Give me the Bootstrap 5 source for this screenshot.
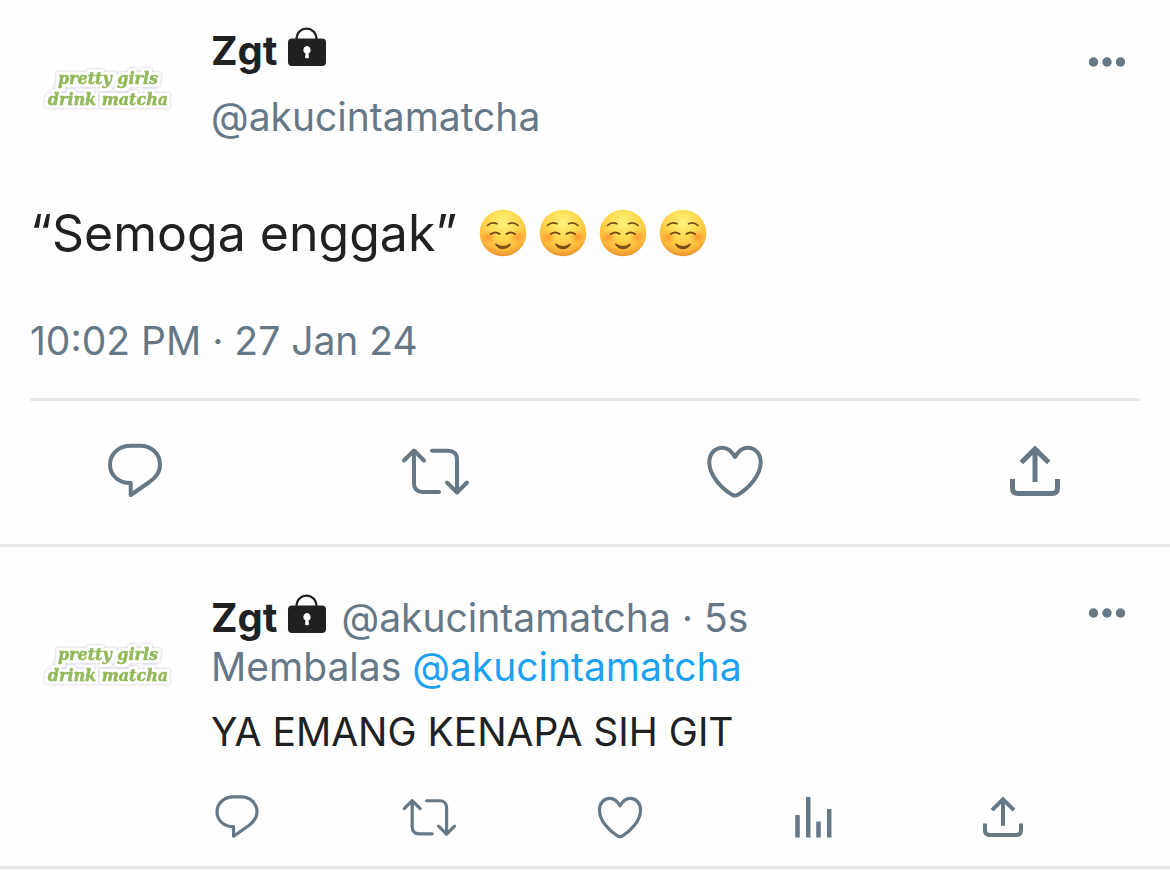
<!DOCTYPE html>
<html lang="id">
<head>
<meta charset="utf-8">
<meta name="viewport" content="width=device-width, initial-scale=1">
<title>Zgt: “Semoga enggak”</title>
<link href="https://cdn.jsdelivr.net/npm/bootstrap@5.3.0/dist/css/bootstrap.min.css" rel="stylesheet">
<style>
  body { font-family: Inter, "Liberation Sans", sans-serif; font-size: 39px; line-height: 48px; color: #202122; background: #fefefe; }
  .slate { color: #667786; }
  .mention { color: #1da1f2; }
  .author { font-size: 40px; }
  .rule-bottom { border-bottom: 3px solid #e8e8e8; }
  .post-main { padding: 27px 30px 43px; }
  .post-reply { padding: 46px 30px 19px; line-height: 49px; }
  .avatar { width: 156px; height: 120px; }
  .avatar text { font: italic bold 16px "DejaVu Serif", serif; fill: #93b95c; stroke: #93b95c; stroke-width: .5px; text-anchor: middle; }
  .post-reply .avatar { margin-top: 10px; }
  .post-body { margin-left: 25px; }
  .name-row { gap: 10px; }
  .handle-row { margin-top: 18px; }
  .lead-text { font-size: 50px; line-height: 60px; margin: 56px 0 54px; gap: 22px; }
  .emoji-row { gap: 12px; }
  .emoji { width: 48px; height: 48px; }
  .lock { width: 40px; height: 40px; }
  .dots { width: 40px; height: 40px; }
  .timestamp { padding-bottom: 33px; }
  .post-actions { padding: 40px 75px 0; }
  .reply-actions { padding: 31px 107px 0 177px; }
  .icon-btn { width: 60px; height: 60px; padding: 0; border: 0; background: none; color: #667786; display: flex; align-items: center; justify-content: center; }
  .action-icon { width: 60px; height: 60px; overflow: visible; fill: none; stroke: currentColor; stroke-width: 4; }
  .reply-actions .action-icon { width: 48px; height: 48px; }
  .more-btn { width: 40px; height: 40px; margin-right: 13px; }
  .post-main .more-btn { margin-top: 15px; }
</style>
</head>
<body>
<svg class="position-absolute" width="0" height="0" aria-hidden="true">
  <defs>
    <radialGradient id="skin" cx="50%" cy="28%" r="72%">
      <stop offset="0" stop-color="#fff27c"/><stop offset=".45" stop-color="#ffda50"/><stop offset=".8" stop-color="#fcb93b"/><stop offset="1" stop-color="#e8922f"/>
    </radialGradient>
    <radialGradient id="blush"><stop offset="0" stop-color="#ff7a25" stop-opacity=".65"/><stop offset="1" stop-color="#ff8a2b" stop-opacity="0"/></radialGradient>
    <filter id="cutout" x="-10%" y="-30%" width="120%" height="160%" color-interpolation-filters="sRGB">
      <feMorphology in="SourceAlpha" operator="dilate" radius="3" result="wide"/>
      <feGaussianBlur in="wide" stdDeviation="1" result="soft"/>
      <feFlood flood-color="#bfb6cc"/><feComposite in2="soft" operator="in" result="edge"/>
      <feFlood flood-color="#ffffff"/><feComposite in2="wide" operator="in" result="paper"/>
      <feMerge><feMergeNode in="edge"/><feMergeNode in="paper"/><feMergeNode in="SourceGraphic"/></feMerge>
    </filter>
    <symbol id="smile" viewBox="0 0 48 48">
      <circle cx="24" cy="24" r="23.3" fill="url(#skin)"/>
      <ellipse cx="9.5" cy="28" rx="8" ry="7" fill="url(#blush)"/><ellipse cx="38.5" cy="28" rx="8" ry="7" fill="url(#blush)"/>
      <g fill="none" stroke="#7b4d16" stroke-linecap="round">
        <path stroke-width="1.7" d="M8.500 16.500q4-4 9.500-1.800M29.500 14.700q5.500-2.200 9.500 1.800"/>
        <path stroke-width="2.1" d="M12 25q4-3 8.500-.2M27.500 24.800q4.500-2.800 8.500.2"/>
      </g>
      <path fill="#7b4d16" d="M17.500 34.800q6.500 4.600 13 0c1-.6 1.700.3 1.100 1.200-3.400 5.600-11.800 5.600-15.200 0-.6-.9.100-1.800 1.100-1.200z"/>
    </symbol>
    <symbol id="lock" viewBox="0 0 40 40">
      <path fill="none" stroke="#202122" stroke-width="2.2" d="M9.500 12.500c0-14.500 20-14.500 20 0"/>
      <rect x="1" y="11.500" width="38" height="27.500" rx="4" fill="#202122"/>
      <path fill="#fefefe" d="M19.500 19a4 4 0 0 1 2 7.500l.5 4c0 1-4 1-4 0l.5-4a4 4 0 0 1 1-7.500z"/>
    </symbol>
    <symbol id="comment" viewBox="0 0 60 60">
      <path d="M25.500 4.800h10C46 4.800 55 12.500 55 23.500c0 8-4 12.600-10.500 17.500L25.700 54V42C14 42 5 34.800 5 23.500S14.500 4.800 25.500 4.800z" stroke-linejoin="round"/>
    </symbol>
    <symbol id="retweet" viewBox="3 0 60 60" overflow="visible">
      <path stroke-linecap="round" stroke-linejoin="round" d="M2 19.500l10-10 10 10M12 10v32.500c0 5.500 3.500 8.500 8.500 8.500H37M30 9.700h16.500c5 0 8.500 3.300 8.500 8.500V51M45 41.500l10 10 10-10"/>
    </symbol>
    <symbol id="heart" viewBox="0 0 60 60">
      <path stroke-linejoin="round" d="M30 16C26.500 9.800 22.500 6.700 17.500 6.700 10 6.700 4.300 12.500 4.300 21.500c0 12.800 12.200 26 22.500 32.100q3.200 1.800 6.400 0C43.500 47.500 55.700 34.300 55.700 21.500c0-9-5.700-14.800-13.200-14.800C37.500 6.700 33.500 9.800 30 16z"/>
    </symbol>
    <symbol id="share" viewBox="0 0 60 60">
      <path stroke-width="5" d="M30 8.500V41M16.300 21.500L30 8 43.700 21.500M7.500 38v9q0 5.500 5.500 5.500h34q5.500 0 5.500-5.500v-9"/>
    </symbol>
    <symbol id="stats" viewBox="0 0 48 48">
      <path stroke-width="4.500" d="M8 44.500V22M18.700 44.500V4M29 44.500V28.500M39.700 44.500V16" transform="translate(1.500 0)"/>
    </symbol>
    <symbol id="dots" viewBox="0 0 40 40">
      <g fill="currentColor"><circle cx="6.500" cy="20" r="4.700"/><circle cx="20" cy="20" r="4.700"/><circle cx="33.500" cy="20" r="4.700"/></g>
    </symbol>
  </defs>
</svg>

<main>
  <article class="post-main rule-bottom">
    <header class="d-flex align-items-start">
      <svg class="avatar flex-shrink-0" viewBox="0 0 156 120"><g filter="url(#cutout)"><text x="78" y="57">pretty girls</text><text x="78" y="78">drink matcha</text></g></svg>
      <div class="post-body flex-grow-1">
        <div class="name-row d-flex align-items-center"><strong class="author">Zgt</strong><svg class="lock mb-2"><use href="#lock"/></svg></div>
        <div class="handle-row slate">@akucintamatcha</div>
      </div>
      <button class="icon-btn more-btn" type="button" aria-label="Lainnya"><svg class="dots"><use href="#dots"/></svg></button>
    </header>
    <p class="lead-text d-flex flex-wrap align-items-center">“Semoga enggak”<span class="emoji-row d-flex"><svg class="emoji"><use href="#smile"/></svg><svg class="emoji"><use href="#smile"/></svg><svg class="emoji"><use href="#smile"/></svg><svg class="emoji"><use href="#smile"/></svg></span></p>
    <div class="timestamp slate rule-bottom">10:02 PM · 27 Jan 24</div>
    <div class="post-actions d-flex justify-content-between">
      <button class="icon-btn" type="button" aria-label="Balas"><svg class="action-icon"><use href="#comment"/></svg></button>
      <button class="icon-btn" type="button" aria-label="Retweet"><svg class="action-icon"><use href="#retweet"/></svg></button>
      <button class="icon-btn" type="button" aria-label="Suka"><svg class="action-icon"><use href="#heart"/></svg></button>
      <button class="icon-btn" type="button" aria-label="Bagikan"><svg class="action-icon"><use href="#share"/></svg></button>
    </div>
  </article>

  <article class="post-reply rule-bottom">
    <div class="d-flex align-items-start">
      <svg class="avatar flex-shrink-0" viewBox="0 0 156 120"><g filter="url(#cutout)"><text x="78" y="57">pretty girls</text><text x="78" y="78">drink matcha</text></g></svg>
      <div class="post-body flex-grow-1">
        <div class="name-row d-flex align-items-center"><strong class="author">Zgt</strong><svg class="lock mb-2"><use href="#lock"/></svg><span class="slate ms-1">@akucintamatcha · 5s</span></div>
        <div class="slate">Membalas <a class="mention text-decoration-none" href="#">@akucintamatcha</a></div>
        <p class="mt-3 mb-0">YA EMANG KENAPA SIH GIT</p>
      </div>
      <button class="icon-btn more-btn" type="button" aria-label="Lainnya"><svg class="dots"><use href="#dots"/></svg></button>
    </div>
    <div class="reply-actions d-flex justify-content-between">
      <button class="icon-btn" type="button" aria-label="Balas"><svg class="action-icon"><use href="#comment"/></svg></button>
      <button class="icon-btn" type="button" aria-label="Retweet"><svg class="action-icon"><use href="#retweet"/></svg></button>
      <button class="icon-btn" type="button" aria-label="Suka"><svg class="action-icon"><use href="#heart"/></svg></button>
      <button class="icon-btn" type="button" aria-label="Statistik"><svg class="action-icon"><use href="#stats"/></svg></button>
      <button class="icon-btn" type="button" aria-label="Bagikan"><svg class="action-icon"><use href="#share"/></svg></button>
    </div>
  </article>
</main>
<script src="https://cdn.jsdelivr.net/npm/bootstrap@5.3.0/dist/js/bootstrap.bundle.min.js"></script>
</body>
</html>
